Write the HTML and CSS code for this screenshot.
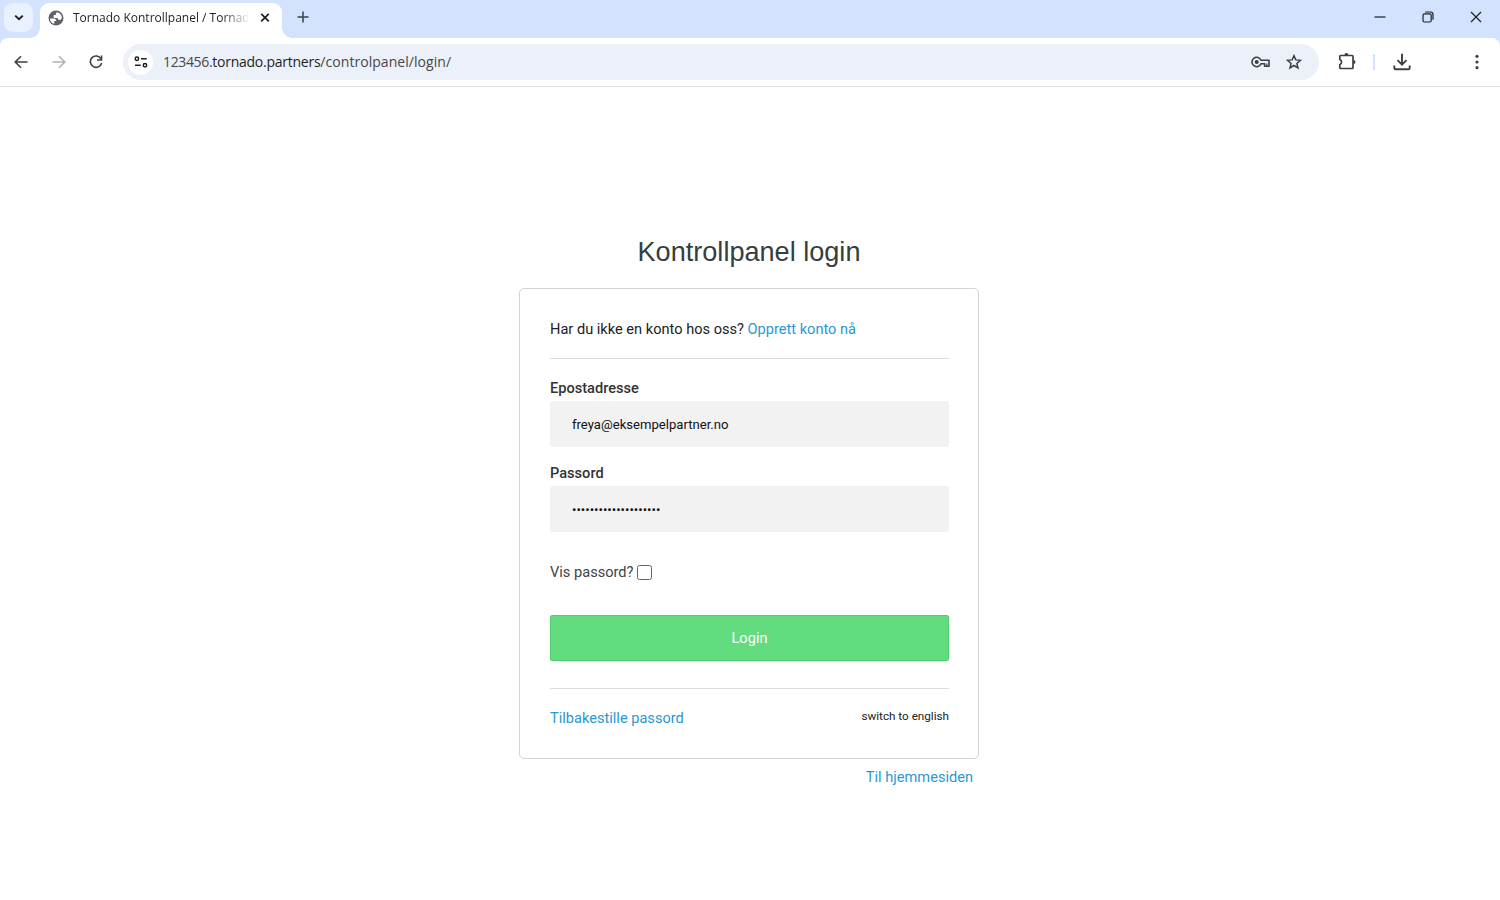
FILE: index.html
```html
<!DOCTYPE html>
<html lang="no">
<head>
    <meta charset="UTF-8">
    <meta name="viewport" content="width=device-width, initial-scale=1.0">
    <title>Tornado Kontrollpanel / Tornado</title>
    <link rel="stylesheet" href="styles.css">
</head>
<body>
    <!-- Browser tabs -->
    <div class="tabstrip">
        <div class="tab-search">
            <svg width="10" height="10" viewBox="0 0 10 10"><path d="M1.2 2.6 5 6.2 8.8 2.6" fill="none" stroke="#1f1f1f" stroke-width="1.9"/></svg>
        </div>
        <div class="tab">
            <svg class="favicon" width="18" height="18" viewBox="0 0 24 24"><circle cx="12" cy="12" r="10" fill="#5f6368"/><path d="M4 12.500h4.600c2.600 0 3.800 1.200 3.800 3.600h-2.600v3.600C6.300 19 4 16 4 12.500zM13.800 4.400c3 .7 5.400 3.200 6 6.300-.2 2.500-1 3.900-2.700 3.900-2 0-3-.9-3-2.600h-3.600c-1.200 0-1.900-.8-1.900-2s.8-1.900 2-1.900h1.200V6.300c0-.9.700-1.700 2-1.900z" fill="#fff"/></svg>
            <span class="tab-title">Tornado Kontrollpanel / Tornado</span>
            <svg class="tab-close" width="10" height="10" viewBox="0 0 10 10"><path d="M1.2.8 8.8 8.4M8.8.8 1.2 8.4" stroke="#1f1f1f" stroke-width="1.7"/></svg>
        </div>
        <svg class="new-tab" width="12" height="12" viewBox="0 0 12 12"><path d="M6 .5v11M.5 6h11" stroke="#3c4043" stroke-width="1.5"/></svg>
        <div class="window-buttons">
            <svg width="12" height="12" viewBox="0 0 12 12"><path d="M.5 6h11" stroke="#1f1f1f" stroke-width="1.2"/></svg>
            <svg width="12" height="12" viewBox="0 0 12 12" fill="none" stroke="#1f1f1f" stroke-width="1.2"><rect x="1" y="2.8" width="8.2" height="8.2" rx="1.5"/><path d="M3.2 1H8.6a2.4 2.4 0 0 1 2.4 2.4v5.4"/></svg>
            <svg width="12" height="12" viewBox="0 0 12 12"><path d="M1 1 11 11M11 1 1 11" stroke="#1f1f1f" stroke-width="1.2"/></svg>
        </div>
    </div>

    <!-- Address bar -->
    <div class="toolbar-wrap">
        <div class="toolbar">
            <div class="nav-buttons">
                <svg width="14" height="14" viewBox="0 0 14 14" fill="none" stroke="#3c4043" stroke-width="1.6"><path d="M13.5 7H1.5M7 1.2 1.2 7 7 12.8"/></svg>
                <svg width="14" height="14" viewBox="0 0 14 14" fill="none" stroke="#b0b2b4" stroke-width="1.6"><path d="M.5 7h12M7 1.2 12.8 7 7 12.8"/></svg>
                <svg width="14" height="14" viewBox="0 0 14 14"><path d="M12 3.8A5.7 5.7 0 1 0 12.6 8" fill="none" stroke="#3c4043" stroke-width="1.6"/><path d="M13.3.5V5.8H8V4.3h3.8V.5z" fill="#3c4043"/></svg>
            </div>
            <div class="omnibox">
                <div class="site-info">
                    <svg width="14" height="12" viewBox="0 0 14 12" fill="none" stroke="#1f1f1f" stroke-width="1.5"><circle cx="2.9" cy="2.8" r="1.7"/><path d="M7 2.8h5.7M1 9.2h5.7"/><circle cx="11" cy="9.2" r="1.7"/></svg>
                </div>
                <span class="url"><span class="sub">123456.</span><span class="host">tornado.partners</span>/controlpanel/login/</span>
                <svg class="key" width="20" height="12" viewBox="0 0 20 12" fill="none" stroke="#3c4043" stroke-width="1.6"><path d="M10 4.2A4.7 4.7 0 1 0 10 7.8H13.6V10.2H18V4.2z" stroke-linejoin="round"/><circle cx="5.7" cy="6" r="2" fill="#3c4043" stroke="none"/><path d="M15.8 7.4v2.6" stroke-width="1.2"/></svg>
                <svg class="star" width="16" height="16" viewBox="0 0 16 16"><path d="M8 1.7 9.8 5.9 14.5 6.3 10.9 9.4 12 14 8 11.5 4 14 5.1 9.4 1.5 6.3 6.2 5.9z" fill="none" stroke="#3c4043" stroke-width="1.5"/></svg>
            </div>
            <svg class="extensions" width="18" height="18" viewBox="0 0 18 18"><path d="M2.6 2.5H14.2Q15 2.5 15 3.3V14.7Q15 15.5 14.2 15.5H2.6Q1.8 15.5 1.8 14.7V11.7A2.8 2.8 0 0 0 1.8 6.5V3.3Q1.8 2.5 2.6 2.5z" fill="none" stroke="#3c4043" stroke-width="1.7"/><path d="M6.4 2a2 2 0 0 1 4 0zM15.5 7a2 2 0 0 1 0 4z" fill="#3c4043"/></svg>
            <span class="separator"></span>
            <svg class="download" width="18" height="18" viewBox="0 0 18 18" fill="none" stroke="#3c4043" stroke-width="1.9"><path d="M9 .8V11.5M4.5 7.2 9 11.7 13.5 7.2M1.3 12.5V15Q1.3 16.3 2.6 16.3H15.4Q16.7 16.3 16.7 15V12.5"/></svg>
            <svg class="menu" width="4" height="16" viewBox="0 0 4 16" fill="#3c4043"><circle cx="2" cy="2.3" r="1.6"/><circle cx="2" cy="8" r="1.6"/><circle cx="2" cy="13.7" r="1.6"/></svg>
        </div>
    </div>

    <div class="page">
        <h1>Kontrollpanel login</h1>
        <form class="login-box">
            <p class="register">Har du ikke en konto hos oss? <a href="#">Opprett konto nå</a></p>
            <label class="field-label" for="email">Epostadresse</label>
            <input class="field" type="text" id="email" value="freya@eksempelpartner.no">
            <label class="field-label" for="password">Passord</label>
            <input class="field" type="password" id="password" value="aaaaaaaaaaaaaaaaaaaa">
            <div class="show-password">
                <label for="show">Vis passord?</label>
                <input type="checkbox" id="show">
            </div>
            <button class="login-button" type="button">Login</button>
            <div class="box-footer">
                <a href="#">Tilbakestille passord</a>
                <a class="language" href="#">switch to english</a>
            </div>
        </form>
        <a class="home-link" href="#">Til hjemmesiden</a>
    </div>
</body>
</html>
```

FILE: styles.css
```css
* {
    box-sizing: border-box;
}

body {
    margin: 0;
    height: 900px;
    overflow: hidden;
    background-color: #fff;
    font-family: Roboto, sans-serif;
    font-size: 14.6px;
    color: #222;
}

svg {
    display: block;
    flex: none;
}

a {
    color: #2a98d4;
    text-decoration: none;
}

/* Tab strip */
.tabstrip {
    display: flex;
    height: 38px;
    padding-left: 4px;
    background-color: #d3e2fd;
}

.tab-search {
    display: flex;
    align-items: center;
    justify-content: center;
    width: 29px;
    height: 29px;
    margin-top: 3px;
    border-radius: 9px;
    background-color: #e9f0fe;
}

.tab {
    position: relative;
    display: flex;
    align-items: center;
    width: 242px;
    height: 35px;
    margin: 3px 0 0 7px;
    padding: 0 12px 6px 7px;
    border-radius: 9px 9px 0 0;
    background-color: #fff;
}

/* curved feet of the active tab */
.tab::before,
.tab::after {
    content: "";
    position: absolute;
    bottom: 0;
    width: 10px;
    height: 10px;
}

.tab::before {
    left: -10px;
    background: radial-gradient(circle at 0 0, transparent 9.5px, #fff 10px);
}

.tab::after {
    right: -10px;
    background: radial-gradient(circle at 100% 0, transparent 9.5px, #fff 10px);
}

.tab-title {
    width: 175px;
    margin-left: 8px;
    overflow: hidden;
    white-space: nowrap;
    font-family: "Open Sans", sans-serif;
    font-size: 12px;
    color: #1f1f1f;
    -webkit-mask-image: linear-gradient(to right, #000 150px, transparent 177px);
    mask-image: linear-gradient(to right, #000 150px, transparent 177px);
}

.tab-close {
    margin-left: auto;
}

.new-tab {
    margin: 11px 0 0 15px;
}

.window-buttons {
    display: flex;
    gap: 36px;
    margin: 11px 18px 0 auto;
}

/* Toolbar */
.toolbar-wrap {
    background-color: #d3e2fd;
}

.toolbar {
    display: flex;
    align-items: center;
    height: 49px;
    padding: 0 21px 0 14px;
    border-bottom: 1px solid #dcdee0;
    border-radius: 8px 8px 0 0;
    background-color: #fff;
}

.nav-buttons {
    display: flex;
    gap: 23.5px;
}

.omnibox {
    display: flex;
    align-items: center;
    width: 1196px;
    height: 36px;
    margin-left: 20px;
    padding: 0 17px 0 5px;
    border-radius: 18px;
    background-color: #ecf0f9;
}

.site-info {
    display: flex;
    align-items: center;
    justify-content: center;
    width: 25px;
    height: 25px;
    border-radius: 50%;
    background-color: #fff;
}

.url {
    margin-left: 10px;
    padding-bottom: 1px;
    font-family: "Open Sans", sans-serif;
    font-size: 14px;
    letter-spacing: 0.05px;
    color: #474747;
}

.url .sub {
    letter-spacing: -0.35px;
}

.url .host {
    letter-spacing: -0.25px;
    color: #1f1f1f;
}

.key {
    margin-left: auto;
}

.star {
    margin-left: 15px;
}

.extensions {
    margin-left: 19px;
}

.separator {
    width: 2px;
    height: 16px;
    margin-left: 17px;
    background-color: #d3e2fd;
}

.download {
    margin-left: 18px;
}

.menu {
    margin-left: auto;
}

/* Login page */
.page {
    display: flex;
    flex-direction: column;
    width: 460px;
    margin-left: 519px;
    padding-top: 147px;
}

.page h1 {
    margin: 0;
    text-align: center;
    font-family: "Liberation Sans", Arial, sans-serif;
    font-size: 27.1px;
    font-weight: normal;
    line-height: 36px;
    color: #344040;
}

.login-box {
    height: 471px;
    margin-top: 18px;
    padding: 28px 29px 0 30px;
    border: 1px solid #d4d4d4;
    border-radius: 5px;
}

.register {
    height: 42px;
    margin: 0;
    border-bottom: 1px solid #dcdcdc;
    line-height: 25px;
}

.field-label {
    display: block;
    height: 24px;
    margin-top: 18px;
    font-weight: 500;
    line-height: 22px;
    color: #333;
}

.field {
    display: block;
    width: 100%;
    height: 46px;
    padding: 0 22px;
    border: none;
    border-radius: 2px;
    background-color: #f2f2f2;
    font-family: Roboto, sans-serif;
    font-size: 13.1px;
    color: #111;
}

.field + .field-label {
    margin-top: 15px;
}

.show-password {
    display: flex;
    align-items: center;
    height: 24px;
    margin-top: 28px;
    color: #444;
}

.show-password input {
    appearance: none;
    width: 15px;
    height: 15px;
    margin: 1px 0 0 4px;
    border: 1px solid #666;
    border-radius: 2.5px;
    background-color: #fff;
}

.login-button {
    display: block;
    width: 100%;
    height: 46px;
    margin-top: 31px;
    border: 1px solid #52d071;
    border-radius: 2px;
    background-color: #62dc7f;
    font-family: Roboto, sans-serif;
    font-size: 14.6px;
    color: #fff;
}

.box-footer {
    display: flex;
    justify-content: space-between;
    margin-top: 27px;
    padding-top: 17px;
    border-top: 1px solid #dcdcdc;
    line-height: 24px;
}

.language {
    font-size: 11.7px;
    line-height: 20px;
    color: #222;
}

.home-link {
    align-self: flex-end;
    margin: 6px 6px 0 0;
    line-height: 24px;
}
```
